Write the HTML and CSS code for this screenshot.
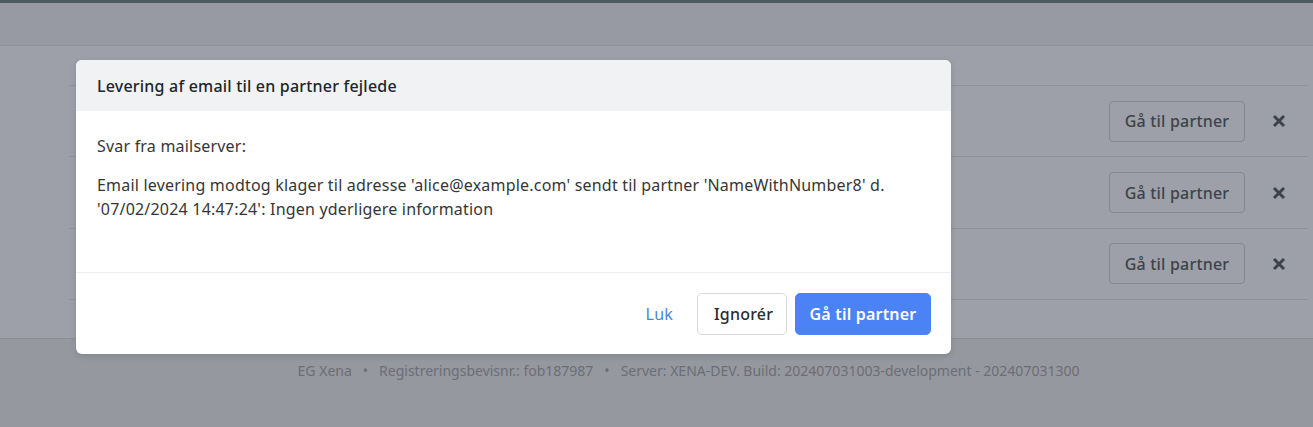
FILE: index.html
```html
<!DOCTYPE html>
<html lang="da">
<head>
<meta charset="utf-8">
<link rel="stylesheet" href="styles.css">
</head>
<body>
<div class="topbar"></div>
<div class="header"></div>
<main class="main">
  <div class="rows">
    <div class="row row-head"></div>
    <div class="row">
      <button class="btn-outline">Gå til partner</button>
      <span class="close-x"><svg viewBox="0 0 14 14" width="14" height="14"><path d="M2 2L12 12M12 2L2 12" stroke="currentColor" stroke-width="3" stroke-linecap="butt"/></svg></span>
    </div>
    <div class="row">
      <button class="btn-outline">Gå til partner</button>
      <span class="close-x"><svg viewBox="0 0 14 14" width="14" height="14"><path d="M2 2L12 12M12 2L2 12" stroke="currentColor" stroke-width="3" stroke-linecap="butt"/></svg></span>
    </div>
    <div class="row">
      <button class="btn-outline">Gå til partner</button>
      <span class="close-x"><svg viewBox="0 0 14 14" width="14" height="14"><path d="M2 2L12 12M12 2L2 12" stroke="currentColor" stroke-width="3" stroke-linecap="butt"/></svg></span>
    </div>
  </div>
</main>
<footer class="footer">
  <span>EG Xena</span><span class="dot">•</span><span>Registreringsbevisnr.: fob187987</span><span class="dot">•</span><span>Server: XENA-DEV. Build: 202407031003-development - 202407031300</span>
</footer>

<div class="modal">
  <div class="modal-header">Levering af email til en partner fejlede</div>
  <div class="modal-body">
    <p class="p1">Svar fra mailserver:</p>
    <p class="p2">Email levering modtog klager til adresse 'alice@example.com' sendt til partner 'NameWithNumber8' d. '07/02/2024 14:47:24': Ingen yderligere information</p>
  </div>
  <div class="modal-footer">
    <button class="btn-link">Luk</button>
    <button class="btn-white">Ignorér</button>
    <button class="btn-primary">Gå til partner</button>
  </div>
</div>
</body>
</html>
```
FILE: styles.css
```css
* { box-sizing: border-box; }
html, body { margin: 0; padding: 0; }
body {
  font-family: "Noto Sans", "Open Sans", sans-serif;
  font-size: 16px;
  letter-spacing: 0.2px;
  background: #9da0a8;
  height: 427px;
  overflow: hidden;
  position: relative;
}
.topbar { height: 3px; background: #4e5a62; }
.header { height: 43px; background: #979aa2; border-bottom: 1px solid #8f9299; }
.main { height: 292px; padding-left: 69px; padding-right: 5px; }
.rows { display: flex; flex-direction: column; }
.row {
  height: 71.4px;
  flex: none;
  border-bottom: 1px solid #8f9299;
  display: flex;
  align-items: center;
  justify-content: flex-end;
  padding-right: 22px;
  gap: 27px;
}
.row-head { height: 40px; }
.btn-outline {
  font-family: inherit;
  font-size: 16px;
  letter-spacing: 0.2px;
  font-weight: 500;
  color: #3e434b;
  background: transparent;
  border: 1px solid #858890;
  border-radius: 4px;
  height: 41px;
  width: 136px;
  padding: 0;
  white-space: nowrap;
}
.close-x { color: #3e434b; display: flex; width: 14px; height: 14px; }
.footer {
  border-top: 1px solid #8b8e95;
  background: #95989f;
  height: 89px;
  padding-left: 64px;
  display: flex;
  justify-content: center;
  padding-top: 22px;
  font-size: 14px;
  letter-spacing: 0;
  color: #6b6e76;
}
.footer .dot { margin: 0 11px; }

.modal {
  position: absolute;
  left: 76px;
  top: 60px;
  width: 875px;
  height: 294px;
  background: #fff;
  border-radius: 6px;
  overflow: hidden;
  box-shadow: 0 2px 6px rgba(0,0,0,0.12);
  display: flex;
  flex-direction: column;
}
.modal-header {
  background: #f1f2f4;
  height: 51px;
  flex: none;
  padding: 14px 21px 0;
  line-height: 24px;
  font-weight: 500;
  color: #212529;
}
.modal-body {
  padding: 23px 21px 0;
  height: 162px;
  flex: none;
  border-bottom: 1px solid #eceef0;
  color: #363636;
  line-height: 24px;
}
.modal-body p { margin: 0; }
.p1 { margin-bottom: 15px !important; }
.modal-footer {
  flex: 1;
  display: flex;
  justify-content: flex-end;
  align-items: center;
  padding: 1px 20px 0;
  gap: 8px;
}
.modal-footer button {
  font-family: inherit;
  font-size: 16px;
  letter-spacing: 0.2px;
  height: 42px;
  border-radius: 5px;
  padding: 0 16px;
  white-space: nowrap;
}
.btn-link { background: none; border: none; color: #4a86d6; font-weight: 400; }
.btn-white { background: #fff; border: 1px solid #d9d9d9; color: #2b2b2b; font-weight: 500; width: 90px; }
.modal-footer .btn-primary { background: #4b83f6; border: 1px solid #4b83f6; color: #fff; font-weight: 600; width: 136px; padding: 0; }
```
